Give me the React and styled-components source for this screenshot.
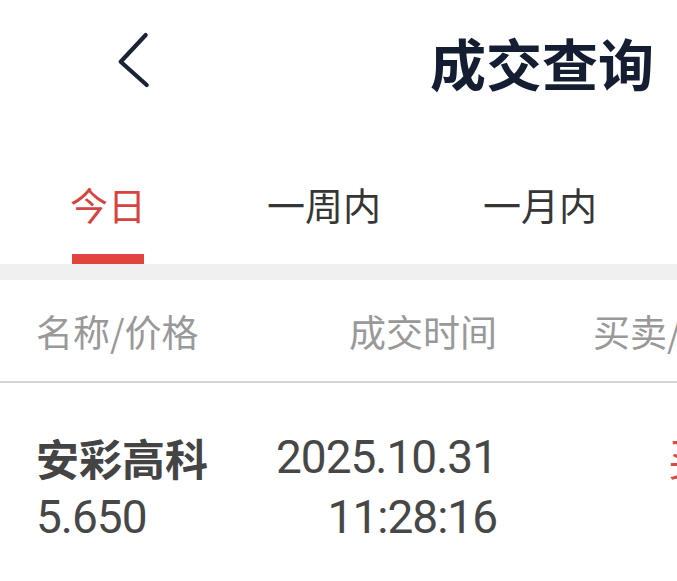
import React from 'react';
import styled, { createGlobalStyle } from 'styled-components';

const GlobalStyle = createGlobalStyle`
  html, body { margin: 0; padding: 0; background: #ffffff; overflow: hidden; }
  body { font-family: "Noto Sans CJK SC", "Noto Sans", sans-serif; }
  * { box-sizing: border-box; }
`;

const Page = styled.div`
  width: 677px;
  overflow: hidden;
  background: #ffffff;
`;

const NavBar = styled.header`
  height: 124px;
  display: flex;
  align-items: center;
  padding: 0 23px 0 114px;
`;

const BackButton = styled.button`
  border: 0;
  background: none;
  padding: 0;
  width: 40px;
  height: 60px;
  margin-top: -4px;
  display: flex;
  cursor: pointer;
`;

const Title = styled.h1`
  margin: 0 0 0 auto;
  font-size: 56px;
  font-weight: 700;
  line-height: 1;
  color: #141d31;
`;

const TabBar = styled.nav`
  display: flex;
  height: 140px;
  align-items: flex-end;
`;

const Tab = styled.div`
  width: 216px;
  display: flex;
  flex-direction: column;
  align-items: center;
`;

const TabLabel = styled.span`
  font-size: 38px;
  line-height: 48px;
  color: ${(p) => (p.$active ? '#d6443f' : '#363636')};
`;

const Indicator = styled.div`
  margin-top: 26px;
  width: 72px;
  height: 10px;
  background: ${(p) => (p.$active ? '#e1443f' : 'transparent')};
`;

const Band = styled.div`
  height: 16px;
  background: #f0f0f0;
`;

const Grid = styled.div`
  display: grid;
  grid-template-columns: 200px 261px 1fr;
  padding-left: 36px;
  white-space: nowrap;
`;

const HeaderRow = styled(Grid)`
  height: 103px;
  align-items: center;
  border-bottom: 2px solid #d4d4d4;
`;

const HeadCell = styled.div`
  font-size: 37px;
  color: #999999;
  text-align: ${(p) => p.$align || 'left'};
  padding-left: ${(p) => (p.$last ? '96px' : '0')};
`;

const DataRow = styled(Grid)`
  padding-top: 44px;
  padding-bottom: 30px;
`;

const Cell = styled.div`
  display: flex;
  flex-direction: column;
  align-items: ${(p) => (p.$align === 'right' ? 'flex-end' : 'flex-start')};
  padding-left: ${(p) => (p.$last ? '96px' : '0')};
`;

const Name = styled.span`
  font-size: 43px;
  font-weight: 700;
  line-height: 60px;
  color: #444444;
`;

const Num = styled.span`
  font-family: Roboto, "Liberation Sans", sans-serif;
  font-size: 46px;
  line-height: 60px;
  letter-spacing: -1px;
  color: #474747;
`;

const Side = styled.span`
  margin-left: 75px;
  font-size: 44px;
  line-height: 60px;
  color: #d44b4b;
`;

function Chevron() {
  return (
    <svg width="40" height="60" viewBox="0 0 40 60" fill="none">
      <path
        d="M31.7 5 L6.7 31.7 L32.7 55"
        stroke="#1b2436"
        strokeWidth="4.2"
        strokeLinecap="round"
        strokeLinejoin="round"
      />
    </svg>
  );
}

const tabs = ['今日', '一周内', '一月内'];

export default function App() {
  return (
    <Page>
      <GlobalStyle />
      <NavBar>
        <BackButton aria-label="返回">
          <Chevron />
        </BackButton>
        <Title>成交查询</Title>
      </NavBar>
      <TabBar>
        {tabs.map((t, i) => (
          <Tab key={t}>
            <TabLabel $active={i === 0}>{t}</TabLabel>
            <Indicator $active={i === 0} />
          </Tab>
        ))}
      </TabBar>
      <Band />
      <HeaderRow>
        <HeadCell>名称/价格</HeadCell>
        <HeadCell $align="right">成交时间</HeadCell>
        <HeadCell $last>买卖/数量</HeadCell>
      </HeaderRow>
      <DataRow>
        <Cell>
          <Name>安彩高科</Name>
          <Num>5.650</Num>
        </Cell>
        <Cell $align="right">
          <Num>2025.10.31</Num>
          <Num>11:28:16</Num>
        </Cell>
        <Cell $last>
          <Side>买入</Side>
        </Cell>
      </DataRow>
    </Page>
  );
}
